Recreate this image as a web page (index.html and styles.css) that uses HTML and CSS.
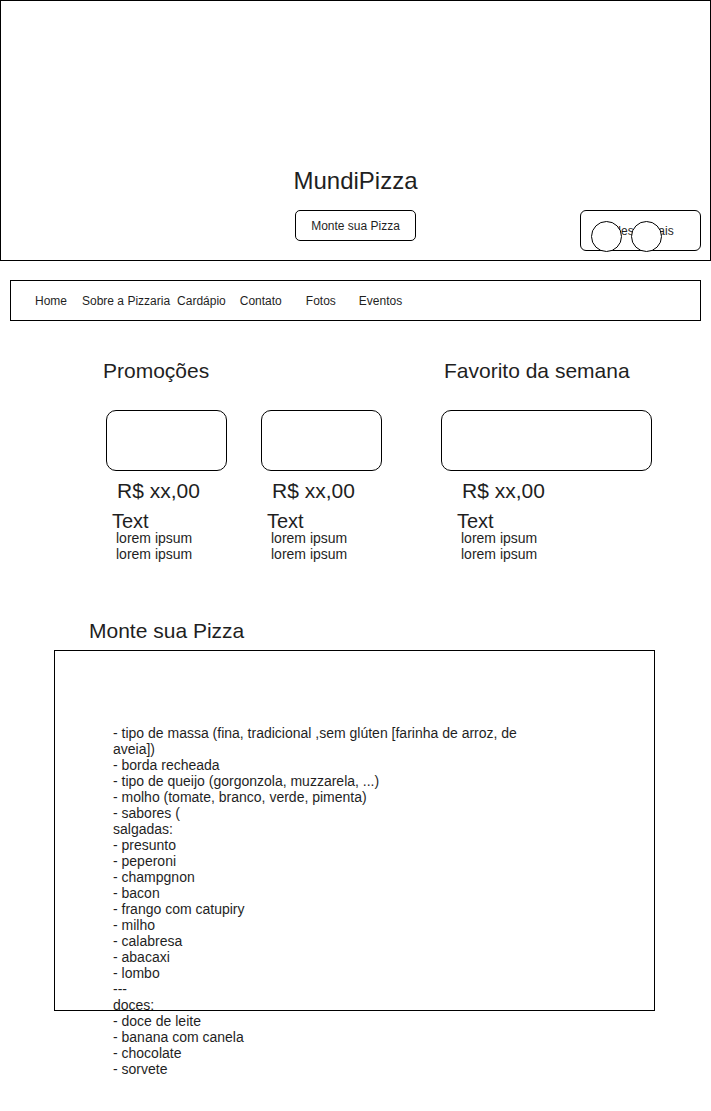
FILE: index.html
```html
<!DOCTYPE html>
<html lang="pt-BR">
<head>
    <meta charset="UTF-8">
    <meta name="viewport" content="width=device-width, initial-scale=1.0">
    <title>MundiPizza</title>
    <link rel="stylesheet" href="styles.css">
</head>
<body>

    <header class="hero">
        <h1 class="brand">MundiPizza</h1>
        <div class="hero-actions">
            <span></span>
            <button class="btn">Monte sua Pizza</button>
            <div class="social">
                Redes sociais
                <span class="dot dot-a"></span>
                <span class="dot dot-b"></span>
            </div>
        </div>
    </header>

    <nav class="menu">
        <a href="#">Home</a>
        <a href="#">Sobre a Pizzaria</a>
        <a href="#">Cardápio</a>
        <a href="#">Contato</a>
        <a href="#">Fotos</a>
        <a href="#">Eventos</a>
    </nav>

    <section class="highlights">
        <div class="promo">
            <h2 class="section-title">Promoções</h2>
            <div class="cards">
                <div class="card">
                    <div class="card-box"></div>
                    <div class="card-info">
                        <div class="price">R$ xx,00</div>
                        <div class="name">Text</div>
                        <div class="desc">lorem ipsum<br>lorem ipsum</div>
                    </div>
                </div>
                <div class="card">
                    <div class="card-box"></div>
                    <div class="card-info">
                        <div class="price">R$ xx,00</div>
                        <div class="name">Text</div>
                        <div class="desc">lorem ipsum<br>lorem ipsum</div>
                    </div>
                </div>
            </div>
        </div>
        <div class="fav">
            <h2 class="section-title">Favorito da semana</h2>
            <div class="card card-wide">
                <div class="card-box"></div>
                <div class="card-info">
                    <div class="price">R$ xx,00</div>
                    <div class="name">Text</div>
                    <div class="desc">lorem ipsum<br>lorem ipsum</div>
                </div>
            </div>
        </div>
    </section>

    <section class="build">
        <h2 class="section-title">Monte sua Pizza</h2>
        <div class="build-box">
            <div class="options">- tipo de massa (fina, tradicional ,sem glúten [farinha de arroz, de aveia])
- borda recheada
- tipo de queijo (gorgonzola, muzzarela, ...)
- molho (tomate, branco, verde, pimenta)
- sabores (
salgadas:
- presunto
- peperoni
- champgnon
- bacon
- frango com catupiry
- milho
- calabresa
- abacaxi
- lombo
---
doces:
- doce de leite
- banana com canela
- chocolate
- sorvete</div>
        </div>
    </section>

</body>
</html>
```

FILE: styles.css
```css
body {
    font-family: "Liberation Sans", Arial, sans-serif;
    color: #1f1f1f;
    background-color: #fff;
    margin: 0;
    padding: 0;
}
.hero {
    box-sizing: border-box;
    width: 711px;
    height: 261px;
    border: 1px solid #000;
    padding-top: 165px;
}
.brand {
    margin: 0;
    font-size: 24px;
    font-weight: normal;
    line-height: 30px;
    text-align: center;
}
.hero-actions {
    display: grid;
    grid-template-columns: 1fr 121px 1fr;
    align-items: start;
    margin-top: 14px;
}
.btn {
    box-sizing: border-box;
    width: 121px;
    height: 31px;
    padding: 0;
    border: 1px solid #000;
    border-radius: 5px;
    background-color: #fff;
    font-family: inherit;
    font-size: 12px;
    color: #1f1f1f;
}
.social {
    position: relative;
    justify-self: end;
    box-sizing: border-box;
    width: 121px;
    height: 41px;
    margin-right: 9px;
    padding-left: 18px;
    border: 1px solid #000;
    border-radius: 6px;
    font-size: 12px;
    line-height: 40px;
}
.dot {
    position: absolute;
    top: 10px;
    box-sizing: border-box;
    width: 31px;
    height: 31px;
    border: 1px solid #000;
    border-radius: 50%;
    background-color: #fff;
}
.dot-a {
    left: 10px;
}
.dot-b {
    left: 50px;
}
.menu {
    box-sizing: border-box;
    display: flex;
    align-items: center;
    width: 691px;
    height: 41px;
    margin: 19px 0 0 10px;
    padding-left: 24px;
    border: 1px solid #000;
}
.menu a {
    font-size: 12px;
    color: #1f1f1f;
    text-decoration: none;
}
.menu a:nth-child(2) { margin-left: 15px; }
.menu a:nth-child(3) { margin-left: 7px; }
.menu a:nth-child(4) { margin-left: 14px; }
.menu a:nth-child(5) { margin-left: 24px; }
.menu a:nth-child(6) { margin-left: 23px; }
.section-title {
    margin: 0;
    font-size: 21px;
    font-weight: normal;
    line-height: 24px;
}
.highlights {
    display: flex;
    margin-top: 38px;
}
.promo {
    margin-left: 103px;
}
.cards {
    display: flex;
    gap: 34px;
    padding-left: 3px;
}
.fav {
    margin-left: 59px;
}
.fav .section-title {
    padding-left: 3px;
}
.card {
    width: 121px;
    margin-top: 27px;
}
.card-wide {
    width: 211px;
}
.card-box {
    box-sizing: border-box;
    height: 61px;
    border: 1px solid #000;
    border-radius: 10px;
}
.card-wide .card-info {
    padding-left: 10px;
}
.price {
    margin-top: 8px;
    padding-left: 11px;
    font-size: 21px;
    line-height: 24px;
}
.name {
    margin-top: 9px;
    padding-left: 6px;
    font-size: 20px;
    line-height: 18px;
}
.desc {
    margin-top: 0;
    padding-left: 10px;
    font-size: 14px;
    line-height: 16px;
}
.build {
    margin-top: 57px;
    padding-bottom: 90px;
}
.build .section-title {
    margin-left: 89px;
}
.build-box {
    box-sizing: border-box;
    width: 601px;
    height: 361px;
    margin: 7px 0 0 54px;
    padding: 74px 0 0 58px;
    border: 1px solid #000;
}
.options {
    width: 420px;
    font-size: 14px;
    line-height: 16px;
    white-space: pre-line;
}
```
